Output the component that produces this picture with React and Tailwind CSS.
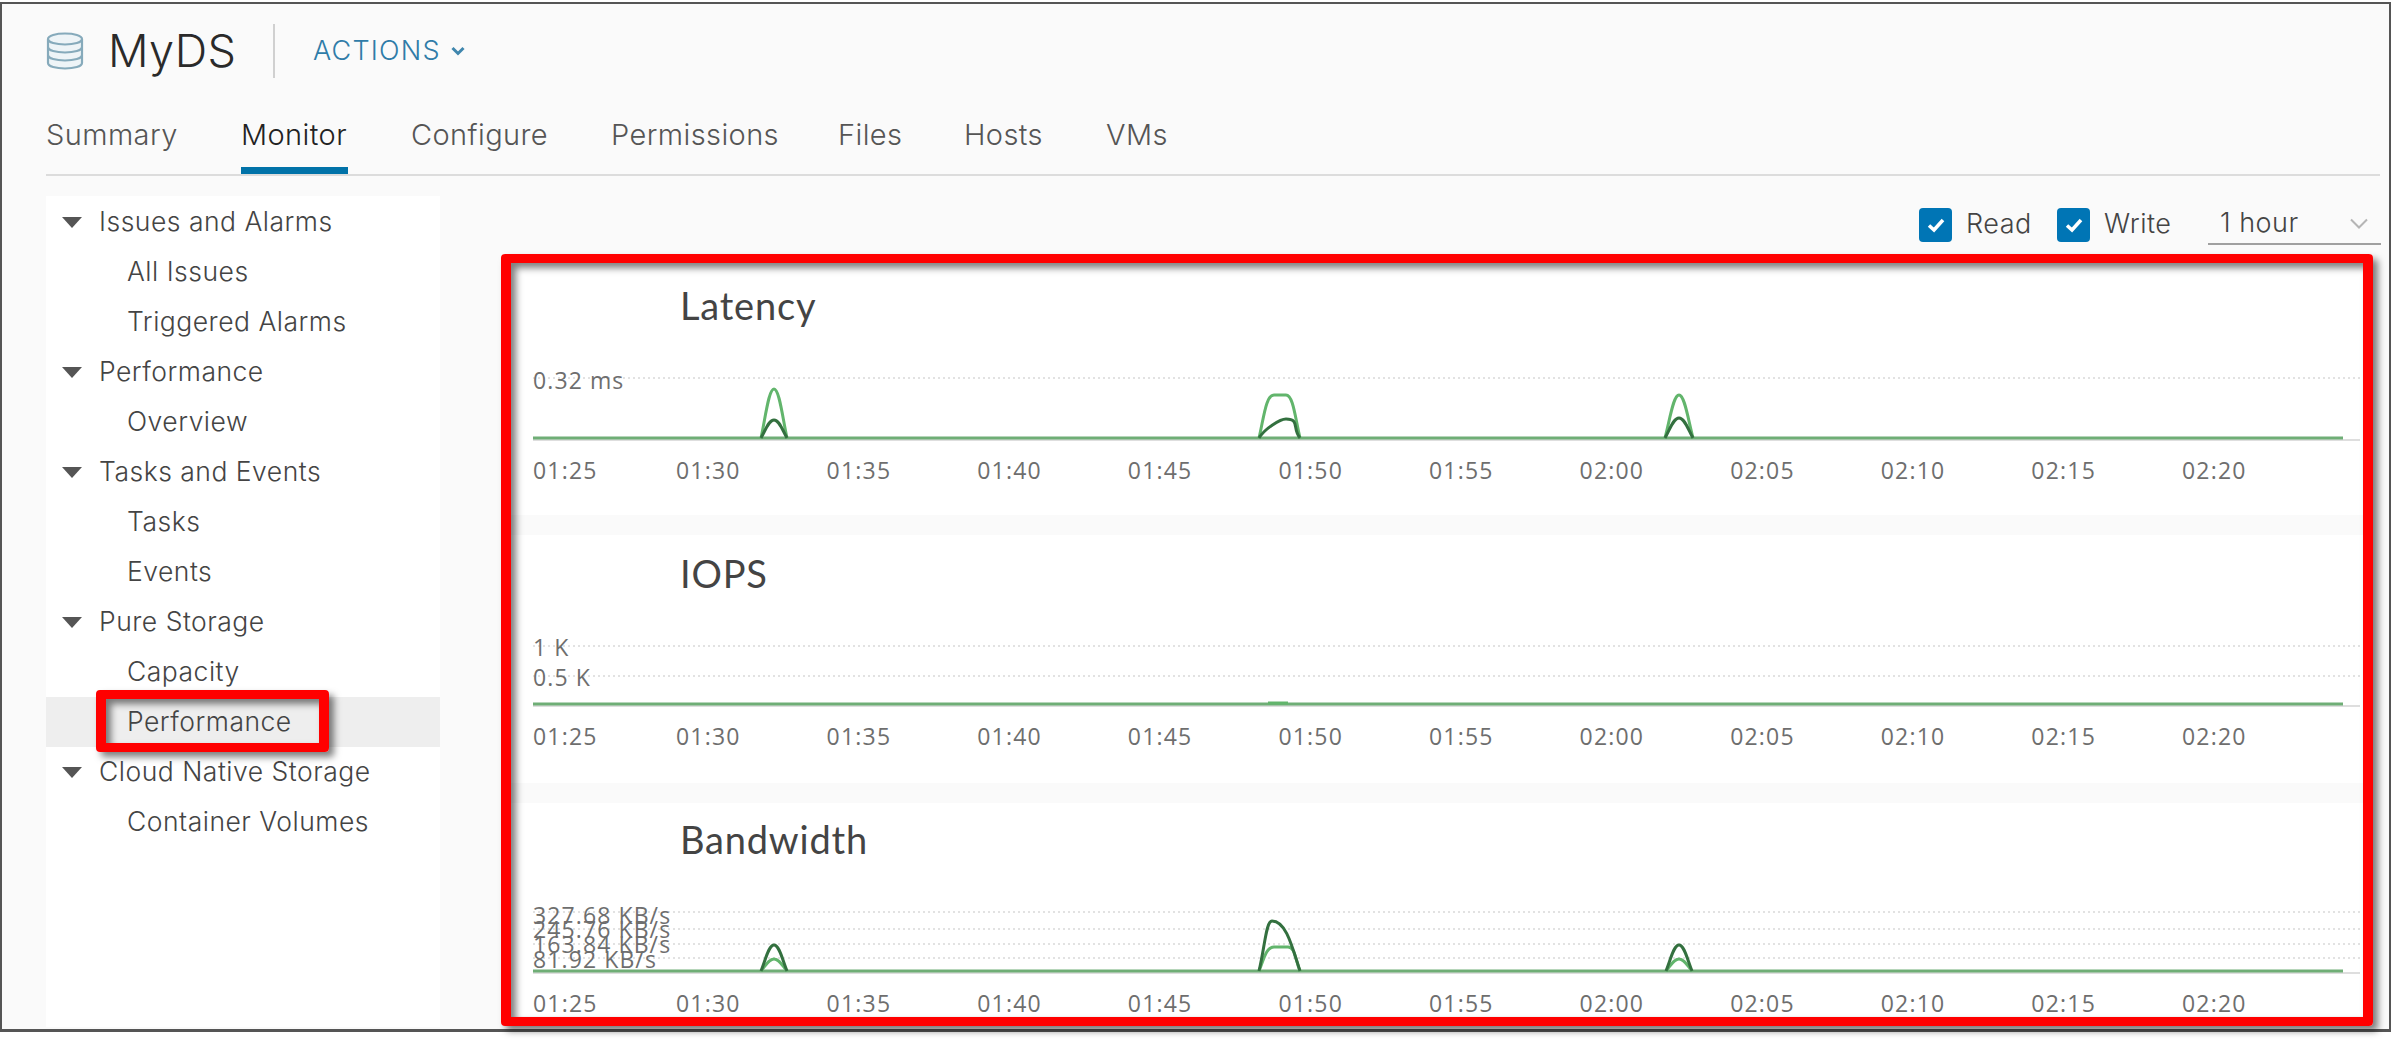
const sans = 'font-["Inter","Lato",sans-serif]';

const tabs = [
  ["Summary", 195],
  ["Monitor", 170],
  ["Configure", 200],
  ["Permissions", 227],
  ["Files", 126],
  ["Hosts", 142],
  ["VMs", 80],
];

const tree = [
  ["Issues and Alarms", 0],
  ["All Issues", 1],
  ["Triggered Alarms", 1],
  ["Performance", 0],
  ["Overview", 1],
  ["Tasks and Events", 0],
  ["Tasks", 1],
  ["Events", 1],
  ["Pure Storage", 0],
  ["Capacity", 1],
  ["Performance", 1, true],
  ["Cloud Native Storage", 0],
  ["Container Volumes", 1],
];

const ticks = ["01:25","01:30","01:35","01:40","01:45","01:50","01:55","02:00","02:05","02:10","02:15","02:20"];

function peak(x0, x1, top, b) {
  const m = (x0 + x1) / 2, w = x1 - x0;
  return `M${x0} ${b}C${x0 + w * 0.18} ${b - (b - top) * 0.45} ${m - w * 0.2} ${top} ${m} ${top}S${x1 - w * 0.18} ${b - (b - top) * 0.45} ${x1} ${b}`;
}
function flat(x0, a, c, x1, top, b) {
  return `M${x0} ${b}C${x0 + 5} ${b - (b - top) * 0.5} ${a - 6} ${top} ${a + 2} ${top}L${c - 2} ${top}C${c + 5} ${top} ${x1 - 5} ${b - (b - top) * 0.5} ${x1} ${b}`;
}
function hump(x0, x1, px, top, b) {
  return `M${x0} ${b}C${x0 + 6} ${b - (b - top) * 0.5} ${px - 6} ${top} ${px} ${top}C${px + 14} ${top} ${x1 - 8} ${b - (b - top) * 0.5} ${x1} ${b}`;
}

const LIGHT = "#62b56c";
const DARK = "#33703f";

function Chart({ height, base, grid, labels, light = [], dark = [] }) {
  return (
    <div className="relative w-[1831px]" style={{ height }}>
      <svg className="absolute inset-0" width="1831" height={height} fill="none">
        {grid.map((y) => (
          <line key={y} x1="0" x2="1827" y1={y} y2={y} stroke="#e2e2e2" strokeWidth="2" strokeDasharray="2 3" />
        ))}
        <line x1="0" x2="1827" y1={base + 2} y2={base + 2} stroke="#dedede" strokeWidth="2" />
        <line x1="0" x2="1810" y1={base} y2={base} stroke="#6fae76" strokeWidth="3" />
        {light.map((d) => (
          <path key={d} d={d} stroke={LIGHT} strokeWidth="3" />
        ))}
        {dark.map((d) => (
          <path key={d} d={d} stroke={DARK} strokeWidth="3" />
        ))}
      </svg>
      {labels.map(([t, y]) => (
        <span
          key={t}
          className="absolute left-0 -translate-y-1/2 whitespace-nowrap font-['Open_Sans',sans-serif] text-[23px] leading-none tracking-[1.1px] text-[#6e6e6e]"
          style={{ top: y }}
        >
          {t}
        </span>
      ))}
    </div>
  );
}

function Ticks() {
  return (
    <div className="mt-[7px] flex h-[28px] items-center font-['Open_Sans',sans-serif] text-[23px] tracking-[1.2px] text-[#6e6e6e]">
      {ticks.map((t, i) => (
        <span key={t} className={i === 0 ? "w-[143px] shrink-0" : "w-[150.6px] shrink-0"}>
          {t}
        </span>
      ))}
    </div>
  );
}

function Title({ children }) {
  return <h2 className="ml-[147px] font-['Lato',sans-serif] text-[38px] leading-[44px] tracking-[0.8px] text-[#444]">{children}</h2>;
}

function Check() {
  return (
    <span className="flex h-[34px] w-[33px] items-center justify-center rounded-[4px] bg-[#0075b5]">
      <svg width="20" height="16" viewBox="0 0 20 16" fill="none">
        <path d="M3 8.5 8 13 17 3" stroke="#fff" strokeWidth="3.5" />
      </svg>
    </span>
  );
}

function DbIcon() {
  return (
    <svg width="38" height="38" viewBox="0 0 38 38" fill="#eef4f7" stroke="#86aabb" strokeWidth="2.2">
      <path d="M2 7C2 3.5 10 1.5 19 1.5S36 3.5 36 7V31C36 34.5 28 36.5 19 36.5S2 34.5 2 31Z" />
      <path d="M2 7C2 10.5 10 12.5 19 12.5S36 10.5 36 7" fill="none" />
      <path d="M2 15C2 18.5 10 20.5 19 20.5S36 18.5 36 15" fill="none" />
      <path d="M2 23C2 26.5 10 28.5 19 28.5S36 26.5 36 23" fill="none" />
    </svg>
  );
}

export default function App() {
  return (
    <div className={`relative h-[1043px] w-[2400px] overflow-hidden bg-white ${sans}`}>
      <div className="mt-[2px] h-[1030px] w-[2391px] border-x-2 border-t-2 border-b-[3px] border-[#555] bg-[#fafafa] pl-[44px]">
        <div className="flex h-[73px] items-center pt-[20px]">
          <DbIcon />
          <span className="ml-[24px] w-[165px] text-[45px] font-light leading-none tracking-[0.4px] text-[#2a2a2a]">MyDS</span>
          <span className="h-[54px] w-[2px] bg-[#d0d0d0]" />
          <span className="ml-[38px] text-[27px] font-light leading-none tracking-[1.2px] text-[#2f7ca8]">ACTIONS</span>
          <svg className="ml-[10px]" width="14" height="10" viewBox="0 0 14 10" fill="none">
            <path d="M1.5 2 7 7.5 12.5 2" stroke="#3f86ad" strokeWidth="3" />
          </svg>
        </div>

        <div className="mr-[9px] mt-[24px] flex h-[75px] items-start border-b-2 border-[#dcdcdc] pt-[14px]">
          {tabs.map(([t, w]) => (
            <div
              key={t}
              className="relative h-[59px] text-[29px] font-light leading-[40px] tracking-[0.4px] text-[#555]"
              style={{ width: w }}
            >
              <span className={t === "Monitor" ? "text-[#222]" : ""}>{t}</span>
              {t === "Monitor" && <span className="absolute bottom-0 left-0 h-[7px] w-[107px] bg-[#0072a8]" />}
            </div>
          ))}
        </div>

        <div className="mt-[20px] flex h-[831px]">
          <aside className="w-[394px] shrink-0 bg-white pt-[1px] text-[26.5px] font-light tracking-[0.5px] text-[#444]">
            {tree.map(([t, lvl, sel], i) => (
              <div
                key={i}
                className={`flex h-[50px] items-center ${lvl ? "pl-[81px]" : "pl-[16px]"} ${sel ? "bg-[#eeeeee]" : ""}`}
              >
                {!lvl && (
                  <svg className="mr-[17px]" width="20" height="11" viewBox="0 0 20 11">
                    <path d="M0 0H20L10 11Z" fill="#555" />
                  </svg>
                )}
                <span>{t}</span>
              </div>
            ))}
          </aside>

          <main className="flex-1">
            <div className="flex h-[66px] items-start pr-[8px] pt-[8px] text-[27px] font-light tracking-[0.5px] text-[#444]">
              <div className="ml-auto flex items-center">
                <Check />
                <span className="ml-[14px] w-[91px]">Read</span>
                <Check />
                <span className="ml-[14px] w-[104px]">Write</span>
                <div className="flex h-[41px] w-[173px] items-center border-b-2 border-[#a0a0a0] pl-[12px]">
                  <span>1 hour</span>
                  <svg className="ml-auto mr-[13px]" width="18" height="11" viewBox="0 0 18 11" fill="none">
                    <path d="M1 1.5 9 9.5 17 1.5" stroke="#b5b5b5" strokeWidth="2" />
                  </svg>
                </div>
              </div>
            </div>

            <div className="ml-[71px] mr-[17px] flex flex-col gap-[20px]">
              <section className="h-[253px] bg-white pl-[22px] pt-[21px]">
                <Title>Latency</Title>
                <div className="mt-[32px]">
                  <Chart
                    height={90}
                    base={79}
                    grid={[19]}
                    labels={[["0.32 ms", 21]]}
                    light={[peak(228, 254, 30, 79), flat(726, 739, 755, 767, 36, 79), peak(1132, 1160, 36, 79)]}
                    dark={[peak(228, 254, 61, 79), hump(726, 767, 753, 60, 79), peak(1132, 1160, 59, 79)]}
                  />
                </div>
                <Ticks />
              </section>

              <section className="h-[248px] bg-white pl-[22px] pt-[16px]">
                <Title>IOPS</Title>
                <div className="mt-[38px]">
                  <Chart
                    height={82}
                    base={71}
                    grid={[13, 43]}
                    labels={[["1 K", 14], ["0.5 K", 44]]}
                    light={["M735 70 L755 70"]}
                  />
                </div>
                <Ticks />
              </section>

              <section className="h-[213px] bg-white pl-[22px] pt-[14px]">
                <Title>Bandwidth</Title>
                <div className="mt-[38px]">
                  <Chart
                    height={83}
                    base={72}
                    grid={[13, 30, 45, 59]}
                    labels={[["327.68 KB/s", 16], ["245.76 KB/s", 30], ["163.84 KB/s", 45], ["81.92 KB/s", 60]]}
                    light={[peak(228, 254, 60, 72), flat(726, 739, 757, 767, 48, 72), peak(1133, 1159, 60, 72)]}
                    dark={[peak(228, 254, 46, 72), hump(726, 767, 739, 22, 72), peak(1133, 1159, 46, 72)]}
                  />
                </div>
                <Ticks />
              </section>
            </div>
          </main>
        </div>
      </div>

      <div className="absolute left-[501px] top-[254px] h-[772px] w-[1872px] rounded-[4px] border-x-[10px] border-y-[9px] border-[#ff0000] shadow-[5px_5px_7px_rgba(0,0,0,0.5),inset_5px_5px_7px_rgba(0,0,0,0.5)]" />
      <div className="absolute left-[96px] top-[690px] h-[62px] w-[233px] rounded-[4px] border-x-[10px] border-y-[9px] border-[#ff0000] shadow-[5px_5px_7px_rgba(0,0,0,0.5),inset_5px_5px_7px_rgba(0,0,0,0.5)]" />
    </div>
  );
}
